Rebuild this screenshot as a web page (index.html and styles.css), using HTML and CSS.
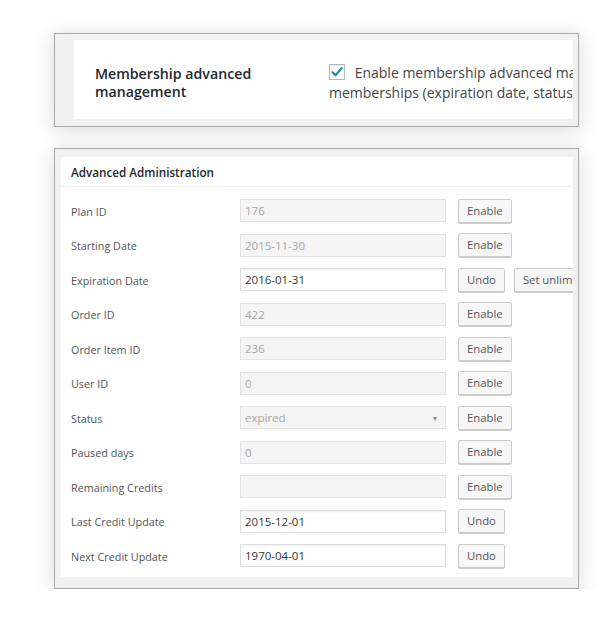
FILE: index.html
```html
<!DOCTYPE html>
<html lang="en">
<head>
<meta charset="utf-8">
<title>Membership advanced management</title>
<link rel="stylesheet" href="styles.css">
</head>
<body>
<div class="page">
  <div class="frame frame-top">
    <div class="panel panel-top">
      <div class="setting-label">Membership advanced management</div>
      <div class="setting-field">
        <span class="checkbox">
          <svg viewBox="0 0 16 16" width="16" height="16" aria-hidden="true"><path d="M3.6 8.2 L6.6 11.2 L12.6 4.2" fill="none" stroke="#1e8cbe" stroke-width="2.2" stroke-linecap="round" stroke-linejoin="round"/></svg>
        </span>
        <span class="setting-text">Enable membership advanced management to edit all the data of<br>memberships (expiration date, status, credits, ...)</span>
      </div>
    </div>
  </div>

  <div class="frame frame-admin">
    <div class="panel postbox">
      <h2 class="hndle">Advanced Administration</h2>
      <div class="rows">
        <div class="row">
          <span class="label">Plan ID</span>
          <span class="input disabled">176</span>
          <span class="actions"><span class="button">Enable</span></span>
        </div>
        <div class="row">
          <span class="label">Starting Date</span>
          <span class="input disabled">2015-11-30</span>
          <span class="actions"><span class="button">Enable</span></span>
        </div>
        <div class="row">
          <span class="label">Expiration Date</span>
          <span class="input">2016-01-31</span>
          <span class="actions"><span class="button">Undo</span><span class="button">Set unlimited</span></span>
        </div>
        <div class="row">
          <span class="label">Order ID</span>
          <span class="input disabled">422</span>
          <span class="actions"><span class="button">Enable</span></span>
        </div>
        <div class="row">
          <span class="label">Order Item ID</span>
          <span class="input disabled">236</span>
          <span class="actions"><span class="button">Enable</span></span>
        </div>
        <div class="row">
          <span class="label">User ID</span>
          <span class="input disabled">0</span>
          <span class="actions"><span class="button">Enable</span></span>
        </div>
        <div class="row">
          <span class="label">Status</span>
          <span class="input disabled select">expired<span class="arrow">&#9662;</span></span>
          <span class="actions"><span class="button">Enable</span></span>
        </div>
        <div class="row">
          <span class="label">Paused days</span>
          <span class="input disabled">0</span>
          <span class="actions"><span class="button">Enable</span></span>
        </div>
        <div class="row">
          <span class="label">Remaining Credits</span>
          <span class="input disabled"></span>
          <span class="actions"><span class="button">Enable</span></span>
        </div>
        <div class="row">
          <span class="label">Last Credit Update</span>
          <span class="input">2015-12-01</span>
          <span class="actions"><span class="button">Undo</span></span>
        </div>
        <div class="row">
          <span class="label">Next Credit Update</span>
          <span class="input">1970-04-01</span>
          <span class="actions"><span class="button">Undo</span></span>
        </div>
      </div>
    </div>
  </div>
</div>
</body>
</html>
```

FILE: styles.css
```css
* { box-sizing: border-box; }

html, body {
  margin: 0;
  padding: 0;
  background: #ffffff;
}

body {
  font-family: "Open Sans", "Noto Sans", sans-serif;
  color: #444;
}

.page {
  padding: 33px 0 0 54px;
}

.frame {
  width: 525px;
  border: 1px solid #aaaaaa;
  background: #f1f1f1;
  box-shadow: 0 3px 20px rgba(0, 0, 0, 0.15);
}

.frame-top {
  height: 94px;
  padding: 6px 5px 7px 19px;
}

.frame-admin {
  margin-top: 21px;
  height: 441px;
  padding: 8px 5px 11px 6px;
}

.panel {
  background: #ffffff;
  overflow: hidden;
}

/* top setting */
.panel-top {
  height: 79px;
  display: flex;
  align-items: flex-start;
  padding: 25px 0 0 21px;
}

.setting-label {
  flex: 0 0 234px;
  font-size: 14.2px;
  font-weight: 600;
  line-height: 18px;
  color: #23282d;
  padding-right: 40px;
}

.setting-field {
  flex: 0 0 auto;
  margin-top: -2px;
  font-size: 14px;
  line-height: 20px;
  color: #444;
  white-space: nowrap;
}

.checkbox {
  display: inline-block;
  width: 16px;
  height: 16px;
  border: 1px solid #b4b9be;
  background: #fff;
  box-shadow: inset 0 1px 2px rgba(0, 0, 0, 0.1);
  vertical-align: -2px;
  margin-right: 6px;
  position: relative;
}

.checkbox svg {
  position: absolute;
  left: -1px;
  top: -1px;
}

/* admin box */
.postbox {
  height: 420px;
}

.hndle {
  margin: 0;
  height: 30px;
  padding: 1px 10px 0;
  border-bottom: 1px solid #eeeeee;
  font-size: 11.7px;
  font-weight: 600;
  line-height: 28px;
  color: #23282d;
}

.rows {
  padding: 12px 0 10px 10px;
  display: flex;
  flex-direction: column;
  gap: 11.5px;
}

.row {
  display: flex;
  align-items: center;
  height: 23px;
}

.label {
  flex: 0 0 169px;
  font-size: 10.8px;
  color: #555;
  padding-top: 1px;
}

.input {
  flex: 0 0 206px;
  height: 23px;
  border: 1px solid #dddddd;
  background: #ffffff;
  box-shadow: inset 0 1px 2px rgba(0, 0, 0, 0.07);
  font-size: 11.5px;
  line-height: 21px;
  padding: 0 4px 0 4px;
  color: #32373c;
  display: flex;
  align-items: center;
}

.input.disabled {
  background: #f5f5f5;
  border-color: #e2e2e2;
  color: #a5a5a5;
  box-shadow: none;
}

.select {
  justify-content: space-between;
}

.arrow {
  font-size: 8px;
  color: #888;
  margin-right: 4px;
}

.actions {
  display: flex;
  gap: 9px;
  margin-left: 12px;
  white-space: nowrap;
}

.button {
  display: inline-block;
  height: 24px;
  padding: 0 8px;
  border: 1px solid #cccccc;
  border-radius: 2px;
  background: #f7f7f7;
  box-shadow: 0 1px 0 #cccccc;
  font-size: 11.3px;
  line-height: 22px;
  color: #555;
}
```
